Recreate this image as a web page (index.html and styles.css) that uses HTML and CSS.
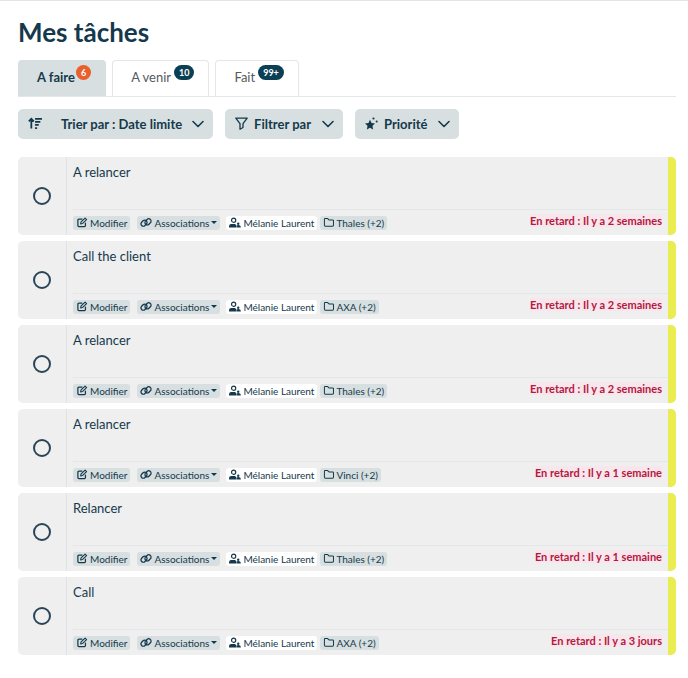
FILE: index.html
```html
<!DOCTYPE html>
<html lang="fr">
<head>
    <meta charset="UTF-8">
    <meta name="viewport" content="width=device-width, initial-scale=1.0">
    <title>Mes tâches</title>
    <link rel="stylesheet" href="styles.css">
</head>
<body>
    <!-- shared icons -->
    <svg class="sprite" aria-hidden="true">
        <symbol id="chevron" viewBox="0 0 12 8"><path d="M1 1.5l5 5 5-5" fill="none" stroke="currentColor" stroke-width="1.6" stroke-linecap="round" stroke-linejoin="round"/></symbol>
        <symbol id="edit" viewBox="0 0 16 16"><path d="M8 3H3.500Q2 3 2 4.500v8Q2 14 3.500 14h8q1.500 0 1.500-1.500V9" fill="none" stroke="currentColor" stroke-width="1.800" stroke-linecap="round"/><path d="M6 10l.7-2.800L12.500 1.500l2.200 2.200L9 9.400z" fill="none" stroke="currentColor" stroke-width="1.600" stroke-linejoin="round"/></symbol>
        <symbol id="link" viewBox="0 0 18 16"><g fill="none" stroke="currentColor" stroke-width="1.900"><rect x="1" y="5.500" width="10" height="7" rx="3.500" transform="rotate(-45 6 9)"/><rect x="7" y="3.500" width="10" height="7" rx="3.500" transform="rotate(-45 12 7)"/></g></symbol>
        <symbol id="person" viewBox="0 0 13 12"><circle cx="5" cy="3.500" r="2.300" fill="none" stroke="currentColor" stroke-width="1.300"/><path d="M0 11.500V9.800Q0 7.500 2.500 7.500h4L8 9v2.500z" fill="currentColor"/><circle cx="10" cy="7.300" r="1.300" fill="currentColor"/><path d="M8.300 11.500V10Q8.500 8.800 10 8.800q2.800 0 2.800 1.700v1z" fill="currentColor"/></symbol>
        <symbol id="folder" viewBox="0 0 12 12"><path d="M1 2.500q0-.8.800-.8h2.700l1.500 1.500h4q.9 0 .9.900v5q0 .9-.9.900H1.900Q1 10 1 9.100z" fill="none" stroke="currentColor" stroke-width="1.100" stroke-linejoin="round"/></symbol>
    </svg>

    <main class="page">
        <h1>Mes tâches</h1>

        <nav class="tabs">
            <button class="tab active">A faire<span class="badge orange">6</span></button>
            <button class="tab">A venir<span class="badge">10</span></button>
            <button class="tab">Fait<span class="badge">99+</span></button>
        </nav>

        <div class="toolbar">
            <button class="filter sort">
                <svg width="15" height="13" viewBox="0 0 16 14" fill="none" stroke="currentColor" stroke-width="1.9"><path d="M3.500 12.500V2M.8 4.700L3.500 2l2.700 2.700M7.500 2H15M7.500 5.300h5.700M7.500 8.600h4M7.500 11.900h2.200"/></svg>
                <span>Trier par : Date limite</span>
                <svg class="chevron"><use href="#chevron"/></svg>
            </button>
            <button class="filter funnel">
                <svg width="13" height="13" viewBox="0 0 13 13" fill="none" stroke="currentColor" stroke-width="1.300" stroke-linejoin="round"><path d="M.8 1.200h11.400L8 6.700v3.800l-3 1.700V6.700z"/></svg>
                <span>Filtrer par</span>
                <svg class="chevron"><use href="#chevron"/></svg>
            </button>
            <button class="filter priority">
                <svg width="13" height="13" viewBox="0 0 13 13" fill="currentColor"><path d="M5 2.700l1.500 3.200 3.500.5-2.500 2.400.6 3.600L5 10.700l-3.100 1.700.6-3.600L0 6.400l3.500-.5z"/><circle cx="8.500" cy="1.500" r="1.100"/><circle cx="11.700" cy="4.500" r="1"/></svg>
                <span>Priorité</span>
                <svg class="chevron"><use href="#chevron"/></svg>
            </button>
        </div>

        <ul class="tasks" id="taskList"></ul>
    </main>

    <script>
      const taskList = document.getElementById("taskList");

      const tasks = [
          { title: "A relancer", account: "Thales (+2)", late: "2 semaines" },
          { title: "Call the client", account: "AXA (+2)", late: "2 semaines" },
          { title: "A relancer", account: "Thales (+2)", late: "2 semaines" },
          { title: "A relancer", account: "Vinci (+2)", late: "1 semaine" },
          { title: "Relancer", account: "Thales (+2)", late: "1 semaine" },
          { title: "Call", account: "AXA (+2)", late: "3 jours" }
      ];

      tasks.forEach((task) => {
          const item = document.createElement("li");
          item.className = "task";
          item.innerHTML = `
            <label class="check"><input type="checkbox" aria-label="${task.title}"></label>
            <div class="task-body">
              <div class="task-title">${task.title}</div>
              <div class="task-footer">
                <button class="chip edit"><svg><use href="#edit"/></svg>Modifier</button>
                <button class="chip assoc"><svg><use href="#link"/></svg>Associations<i class="caret"></i></button>
                <span class="chip person"><svg><use href="#person"/></svg>Mélanie Laurent</span>
                <span class="chip account"><svg><use href="#folder"/></svg>${task.account}</span>
                <span class="late"><mark>En retard : Il y a ${task.late}</mark></span>
              </div>
            </div>`;
          taskList.appendChild(item);
      });
    </script>
</body>
</html>
```
FILE: styles.css
```css
* {
    box-sizing: border-box;
}
body {
    margin: 0;
    border-top: 1px solid #e4e4e4;
    background-color: #ffffff;
    color: #15394c;
    font-family: Lato, sans-serif;
}
button {
    margin: 0;
    border: none;
    color: inherit;
    font-family: inherit;
    cursor: pointer;
}
svg {
    flex: none;
}
.sprite {
    display: none;
}
.page {
    padding: 14px 12px 20px 18px;
}
h1 {
    margin: 0 0 11px;
    font-size: 26px;
    line-height: 34px;
    font-weight: 700;
}
.tabs {
    display: flex;
    gap: 6px;
    border-bottom: 1px solid #e4e6e8;
}
.tab {
    display: flex;
    align-items: flex-start;
    height: 36px;
    padding: 4px 14px 0 18px;
    border: 1px solid #e4e6e8;
    border-bottom: none;
    border-radius: 4px 4px 0 0;
    background-color: #ffffff;
    color: #555b60;
    font-size: 13px;
    line-height: 24px;
}
.tab.active {
    background-color: #d7dfe0;
    border-color: #d7dfe0;
    color: #15394c;
    font-weight: 700;
}
.badge {
    margin-left: 3px;
    padding: 0 5px;
    border-radius: 8px;
    background-color: #0b4054;
    color: #ffffff;
    font-size: 9px;
    line-height: 15px;
    font-weight: 700;
}
.badge.orange {
    margin-left: 1px;
    background-color: #e8602c;
}
.toolbar {
    display: flex;
    gap: 12px;
    margin: 12px 0 18px;
}
.filter {
    display: flex;
    align-items: center;
    height: 30px;
    padding: 0 9px 1px 10px;
    border-radius: 5px;
    background-color: #d7dfe0;
    font-size: 13px;
    font-weight: 700;
}
.filter span {
    margin: 0 11px 0 6px;
}
.filter.sort span {
    margin: 0 10px 0 18px;
}
.chevron {
    width: 12px;
    height: 8px;
}
.tasks {
    display: flex;
    flex-direction: column;
    gap: 6px;
    margin: 0;
    padding: 0;
    list-style: none;
}
.task {
    display: flex;
    height: 78px;
    border-right: 8px solid #eaed51;
    border-radius: 5px;
    background-color: #efefef;
}
.check {
    display: flex;
    align-items: center;
    justify-content: center;
    width: 49px;
    border-right: 1px solid #dde3e5;
}
.check input {
    appearance: none;
    width: 18px;
    height: 18px;
    margin: 0;
    border: 2px solid #2b4558;
    border-radius: 50%;
}
.task-body {
    display: flex;
    flex: 1;
    flex-direction: column;
    justify-content: space-between;
    padding-left: 6px;
}
.task-title {
    padding-top: 6px;
    font-size: 13px;
    line-height: 18px;
}
.task-footer {
    display: flex;
    align-items: center;
    height: 26px;
    padding-right: 6px;
    border-top: 1px solid #e4e6e7;
}
.chip {
    display: flex;
    align-items: center;
    height: 14px;
    padding: 0 3px;
    border-radius: 3px;
    background-color: #d7dfe0;
    font-size: 10px;
    line-height: 14px;
    white-space: nowrap;
}
.chip svg {
    width: 12px;
    height: 11px;
    margin-right: 2px;
}
.chip.edit {
    margin-right: 7px;
}
.chip.assoc {
    margin-right: 6px;
}
.chip.person {
    margin-right: 3px;
    background-color: #ffffff;
}
.chip.account svg {
    margin-right: 1px;
}
.caret {
    margin-left: 2px;
    border: 3px solid transparent;
    border-top-color: currentColor;
    border-bottom: none;
}
.late {
    margin-left: auto;
    padding-bottom: 4px;
    font-size: 11px;
    line-height: 16px;
    font-weight: 700;
    white-space: nowrap;
}
.late mark {
    background-color: #f7e6ec;
    color: #b5173f;
}
```
